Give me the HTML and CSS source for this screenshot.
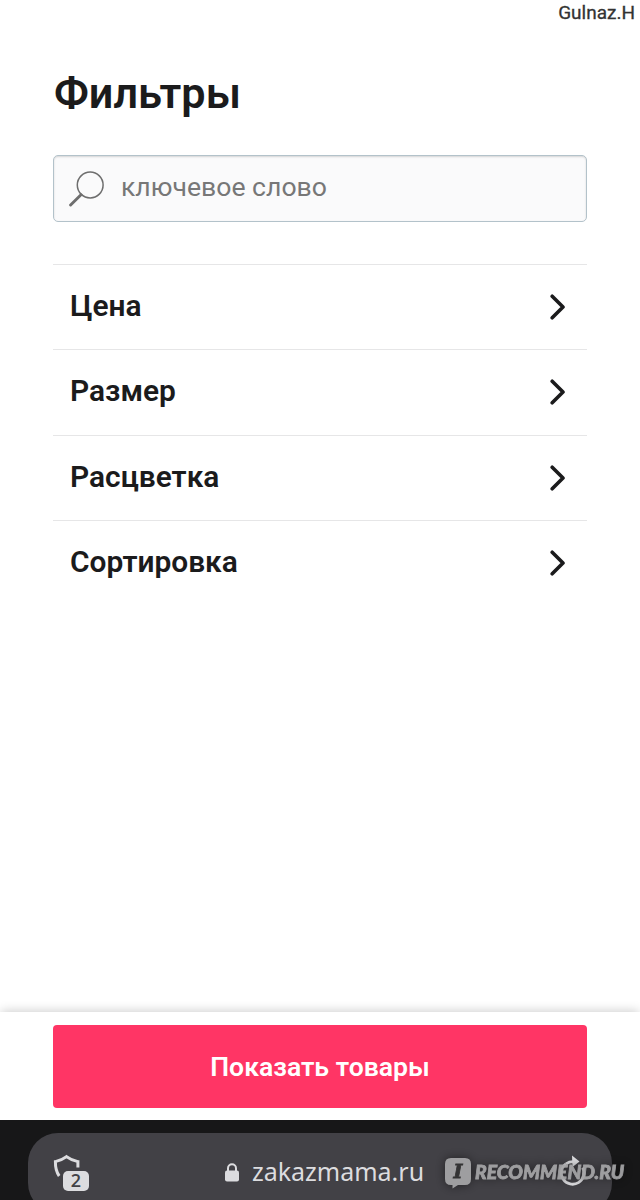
FILE: index.html
```html
<!DOCTYPE html>
<html lang="ru">
<head>
    <meta charset="UTF-8">
    <meta name="viewport" content="width=device-width, initial-scale=1.0">
    <title>Фильтры</title>
    <link rel="stylesheet" href="styles.css">
</head>
<body>
    <div class="author">Gulnaz.H</div>

    <main class="filters">
        <h1>Фильтры</h1>

        <label class="search">
            <svg class="search-icon" width="36" height="36" viewBox="0 0 36 36" fill="none" stroke="#6e6e6e">
                <circle cx="21.2" cy="14" r="12.9" stroke-width="1.5"/>
                <path d="M12 23.7L1.6 34" stroke-width="2.9" stroke-linecap="round"/>
            </svg>
            <input type="text" placeholder="ключевое слово">
        </label>

        <ul class="filter-list">
            <li>
                <span>Цена</span>
                <svg class="arrow" width="16" height="26" viewBox="0 0 16 26"><path d="M2.2 2.2L13 13L2.2 23.8"/></svg>
            </li>
            <li>
                <span>Размер</span>
                <svg class="arrow" width="16" height="26" viewBox="0 0 16 26"><path d="M2.2 2.2L13 13L2.2 23.8"/></svg>
            </li>
            <li>
                <span>Расцветка</span>
                <svg class="arrow" width="16" height="26" viewBox="0 0 16 26"><path d="M2.2 2.2L13 13L2.2 23.8"/></svg>
            </li>
            <li>
                <span>Сортировка</span>
                <svg class="arrow" width="16" height="26" viewBox="0 0 16 26"><path d="M2.2 2.2L13 13L2.2 23.8"/></svg>
            </li>
        </ul>
    </main>

    <div class="actions">
        <button class="show-btn" type="button">Показать товары</button>
    </div>

    <footer class="browser">
        <div class="address-bar">
            <div class="shield">
                <svg width="28" height="24" viewBox="0 0 28 24" fill="none" stroke="#dcdcdf" stroke-width="3">
                    <path d="M6.2 22C3.6 18.5 2.3 14 2.4 7.6Q8.5 6.4 13.5 2.6Q18.5 6.4 24.9 7.6V13.5"/>
                </svg>
                <span class="shield-count">2</span>
            </div>
            <div class="url">
                <svg width="14" height="19" viewBox="0 0 14 19">
                    <path d="M3 9V5.3a4 4 0 0 1 8 0V9" fill="none" stroke="#dcdcdf" stroke-width="2"/>
                    <rect y="7.5" width="14" height="11" rx="2" fill="#dcdcdf"/>
                </svg>
                <span>zakazmama.ru</span>
            </div>
            <svg class="reload" width="28" height="32" viewBox="0 0 28 32">
                <path d="M7 8.8A11.3 11.3 0 1 0 23.6 12.6" fill="none" stroke="#dcdcdf" stroke-width="2.8"/>
                <path d="M7 8.8Q10 6.6 14.5 6.6" fill="none" stroke="#dcdcdf" stroke-width="2.8"/>
                <path d="M13 0.5L20.5 6.5L13.5 12Z" fill="#dcdcdf"/>
            </svg>
        </div>
        <div class="watermark">
            <svg width="27" height="31" viewBox="0 0 27 31">
                <path d="M6 0H20Q26 0 26 6V21Q26 27 20 27H13L7.5 30.5V27H6Q0 27 0 21V6Q0 0 6 0Z"/>
            </svg>
            <span class="watermark-i">I</span>
            <span class="watermark-text">RECOMMEND.RU</span>
        </div>
    </footer>
</body>
</html>
```
FILE: styles.css
```css
* {
    box-sizing: border-box;
}

body {
    margin: 0;
    height: 1200px;
    display: flex;
    flex-direction: column;
    overflow: hidden;
    background: #fff;
    color: #1b1b1c;
    font-family: Roboto, sans-serif;
}

.author {
    height: 26px;
    padding-right: 5px;
    text-align: right;
    font-size: 19px;
    line-height: 26px;
    color: #333;
    -webkit-text-stroke: 0.3px #333;
}

.filters {
    flex: 1;
    padding: 42px 53px 0;
}

h1 {
    margin: 0 0 35px;
    padding-left: 1px;
    font-size: 43.2px;
    font-weight: 600;
    line-height: 52px;
}

.search {
    display: flex;
    align-items: center;
    gap: 16.5px;
    height: 67px;
    padding: 0 15px 0 14.5px;
    border: 1px solid #b3c2ca;
    border-radius: 5px;
    background: #fafafb;
    box-shadow: inset 0 1px 2px rgba(0, 0, 0, 0.15);
}

.search input {
    flex: 1;
    min-width: 0;
    padding: 0 0 4px;
    border: 0;
    outline: 0;
    background: none;
    font-family: Roboto, sans-serif;
    font-size: 26.6px;
}

.search input::placeholder {
    color: #777;
}

.filter-list {
    list-style: none;
    margin: 42px 0 0;
    padding: 0;
}

.filter-list li {
    display: flex;
    align-items: center;
    justify-content: space-between;
    height: 85.3px;
    padding: 0 21.5px 0 17px;
    border-top: 1px solid #e6e6e7;
    font-size: 29.9px;
    font-weight: 600;
}

.filter-list span {
    padding-bottom: 3px;
}

.arrow {
    fill: none;
    stroke: #1b1b1c;
    stroke-width: 3.6;
    stroke-linecap: round;
    stroke-linejoin: round;
}

.actions {
    height: 108px;
    padding: 13px 53px 0;
    background: #fff;
    box-shadow: 0 -2px 10px -1px rgba(0, 0, 0, 0.2);
}

.show-btn {
    display: block;
    width: 100%;
    height: 83px;
    border: 0;
    border-radius: 4px;
    background: #ff3565;
    color: #fff;
    font-family: Roboto, sans-serif;
    font-size: 26.6px;
    font-weight: 600;
}

.browser {
    position: relative;
    height: 80px;
    padding: 13px 28px 0;
    background: #171718;
    overflow: hidden;
}

.address-bar {
    display: flex;
    align-items: flex-start;
    justify-content: space-between;
    height: 80px;
    padding: 21px 25px 0;
    border-radius: 30px;
    background: #424146;
}

.shield {
    position: relative;
    width: 37px;
    height: 38px;
}

.shield-count {
    position: absolute;
    left: 10px;
    top: 17px;
    width: 26px;
    height: 20px;
    border-radius: 5px;
    background: #dcdcdf;
    color: #424146;
    font: 600 18px/19px "Open Sans", sans-serif;
    text-align: center;
}

.url {
    display: flex;
    align-items: center;
    gap: 13px;
    height: 36px;
    color: #dcdcdf;
    font-family: "Noto Sans", sans-serif;
    font-size: 25px;
}

.url span {
    padding-bottom: 2px;
}

.reload {
    margin-top: 1px;
}

/* site mark over the address bar */
.watermark {
    position: absolute;
    left: 445px;
    top: 38px;
    display: flex;
    align-items: flex-start;
    gap: 3px;
    color: #a4a4a6;
    opacity: 0.94;
    filter: drop-shadow(0 0 5px rgba(0, 0, 0, 0.5));
    font-family: Lato, sans-serif;
    font-style: italic;
    font-weight: 900;
}

.watermark svg {
    fill: #a4a4a6;
}

.watermark-i {
    position: absolute;
    left: 0;
    top: 0;
    width: 26px;
    color: #333;
    font: italic bold 19px/27px "DejaVu Serif", serif;
    text-align: center;
    -webkit-text-stroke: 0.8px #333;
}

.watermark-text {
    font-size: 19.3px;
    line-height: 27px;
    white-space: nowrap;
    -webkit-text-stroke: 0.8px #a4a4a6;
}
```
